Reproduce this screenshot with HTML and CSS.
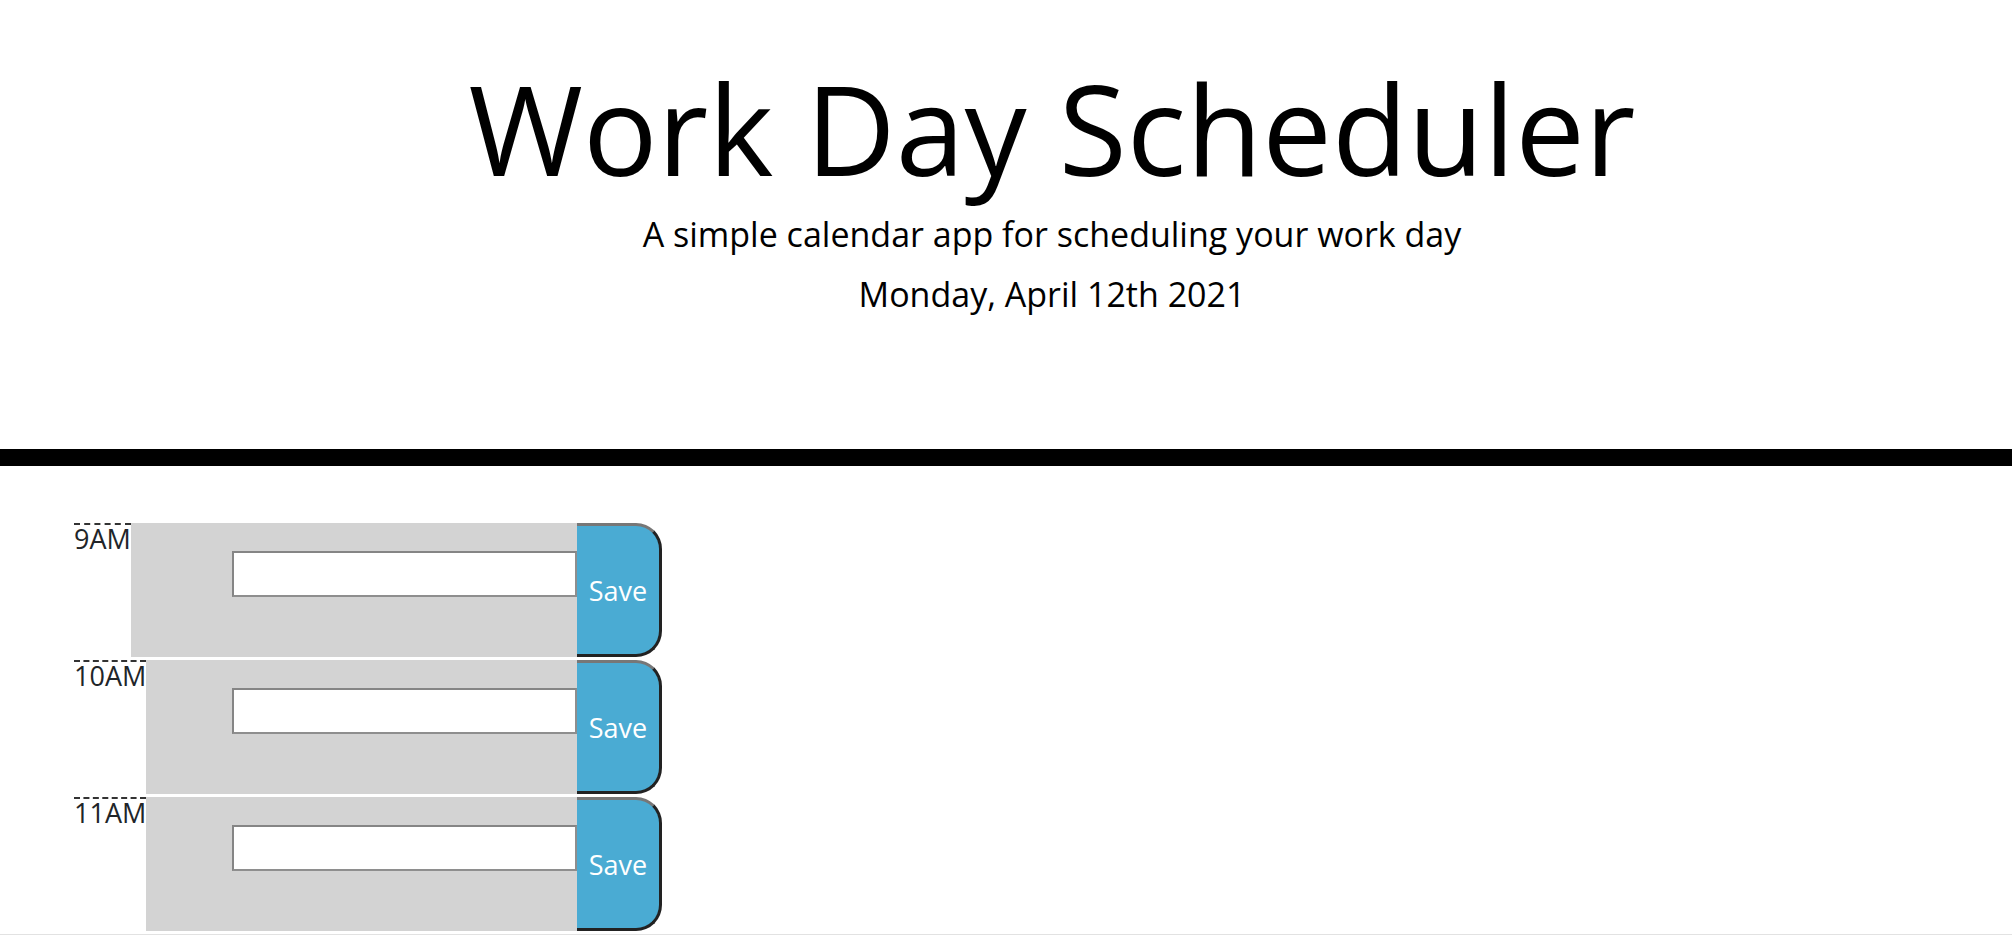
FILE: index.html
```html
<!DOCTYPE html>
<html lang="en">
<head>
<meta charset="UTF-8">
<title>Work Day Scheduler</title>
<link rel="stylesheet" href="styles.css">
</head>
<body>
<header class="jumbotron">
  <h1 class="title">Work Day Scheduler</h1>
  <p class="lead">A simple calendar app for scheduling your work day</p>
  <p class="current-day">Monday, April 12th 2021</p>
</header>
<main class="schedule">
  <div class="time-row"><div class="hour">9AM</div><div class="block past"><input class="entry" type="text"></div><button class="save-btn">Save</button></div>
  <div class="time-row"><div class="hour">10AM</div><div class="block past"><input class="entry" type="text"></div><button class="save-btn">Save</button></div>
  <div class="time-row"><div class="hour">11AM</div><div class="block past"><input class="entry" type="text"></div><button class="save-btn">Save</button></div>
</main>
<div class="page-edge"></div>
</body>
</html>
```

FILE: styles.css
```css
html, body {
  margin: 0;
  padding: 0;
  background: #ffffff;
}

body {
  font-family: "Open Sans", "Liberation Sans", sans-serif;
  color: #212529;
  line-height: 1;
  overflow: hidden;
}

.jumbotron {
  padding: 66px 0 0 92px;
  height: 383px;
  border-bottom: 17px solid #000000;
  text-align: center;
  color: #000000;
}

.title {
  margin: 0;
  font-size: 124px;
  font-weight: 400;
  line-height: 1;
}

.lead {
  margin: 27px 0 0;
  font-size: 34px;
  font-weight: 400;
  line-height: 1;
}

.current-day {
  margin: 26px 0 0;
  font-size: 34px;
  font-weight: 400;
  line-height: 1;
}

.schedule {
  padding: 54px 0 0 74px;
}

.time-row {
  display: flex;
  width: 588px;
  height: 134px;
  border-top: 3px solid #ffffff;
}

.hour {
  flex: none;
  align-self: flex-start;
  border-top: 2px dashed #333333;
  background: #ffffff;
  color: #212529;
  font-size: 27px;
  line-height: 27px;
}

.block {
  flex: 1;
  display: flex;
  justify-content: flex-end;
  align-items: flex-start;
}

.past {
  background-color: #d3d3d3;
}

.entry {
  box-sizing: border-box;
  width: 345px;
  height: 46px;
  margin: 28px 0 0;
  padding: 0 6px;
  border: 2px solid #8e8e8e;
  border-top-color: #858585;
  border-left-color: #858585;
  background: #ffffff;
  font-family: "Open Sans", sans-serif;
  font-size: 22px;
}

.save-btn {
  box-sizing: border-box;
  flex: none;
  width: 85px;
  height: 134px;
  padding: 0;
  border-top: 3px solid #777777;
  border-right: 3px solid #222222;
  border-bottom: 3px solid #222222;
  border-left: 0;
  border-radius: 0 26px 26px 0;
  background-color: #4aabd3;
  color: #ffffff;
  font-family: "Open Sans", sans-serif;
  font-size: 27px;
}

.page-edge {
  margin-top: 3px;
  border-top: 1px solid #e2e2e2;
}
```
